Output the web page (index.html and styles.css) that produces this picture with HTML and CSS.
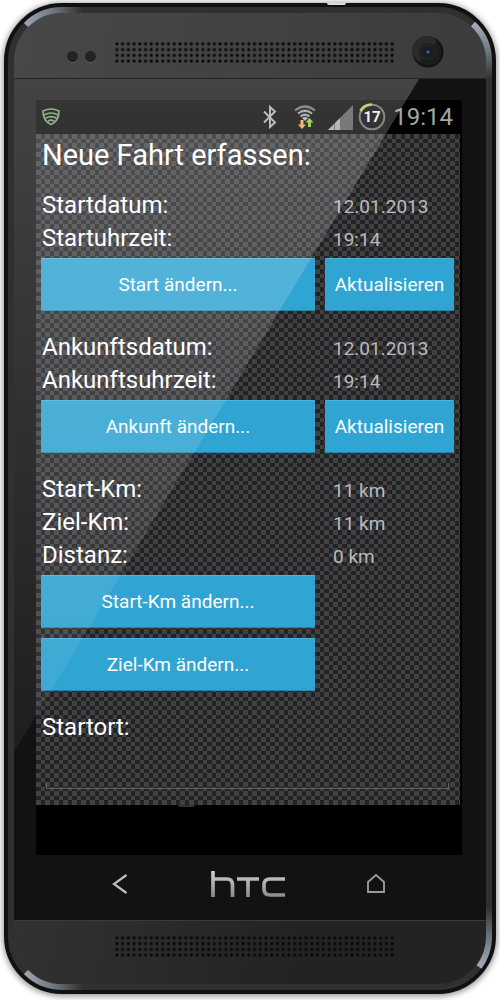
FILE: index.html
```html
<!DOCTYPE html>
<html lang="de">
<head>
<meta charset="utf-8">
<meta name="viewport" content="width=device-width, initial-scale=1">
<title>Neue Fahrt erfassen</title>
<link rel="stylesheet" href="styles.css">
</head>
<body>
<div class="phone">
  <span class="notch"></span>
  <svg class="corner corner-tl" viewBox="0 0 90 90" aria-hidden="true">
    <defs><linearGradient id="g1" gradientUnits="userSpaceOnUse" x1="18" y1="0" x2="75" y2="0"><stop offset="0" stop-color="#9aa3af"/><stop offset=".5" stop-color="#6d747c"/><stop offset="1" stop-color="#6d747c" stop-opacity="0"/></linearGradient></defs>
    <path d="M18 18A51 51 0 0 1 54 3H75" fill="none" stroke="url(#g1)" stroke-width="6"/>
  </svg>
  <svg class="corner corner-tr" viewBox="0 0 90 90" aria-hidden="true">
    <defs><linearGradient id="g2" gradientUnits="userSpaceOnUse" x1="0" y1="18" x2="0" y2="72"><stop offset="0" stop-color="#a0a9b5"/><stop offset=".5" stop-color="#6d747c"/><stop offset="1" stop-color="#6d747c" stop-opacity="0"/></linearGradient></defs>
    <path d="M71 17A51 51 0 0 1 87 54V72" fill="none" stroke="url(#g2)" stroke-width="6"/>
  </svg>
  <svg class="corner corner-bl" viewBox="0 0 90 90" aria-hidden="true">
    <path d="M18 72A51 51 0 0 0 54 87H75" fill="none" stroke="url(#g1)" stroke-width="6"/>
  </svg>
  <svg class="corner corner-br" viewBox="0 0 90 90" aria-hidden="true">
    <defs><linearGradient id="g3" gradientUnits="userSpaceOnUse" x1="0" y1="67" x2="0" y2="7"><stop offset="0" stop-color="#a0a9b5"/><stop offset=".5" stop-color="#6d747c"/><stop offset="1" stop-color="#6d747c" stop-opacity="0"/></linearGradient></defs>
    <path d="M77 67A51 51 0 0 0 87 36V7" fill="none" stroke="url(#g3)" stroke-width="6"/>
  </svg>

  <header class="plate plate-top">
    <span class="sensors"><i></i><i></i></span>
    <svg class="speaker" viewBox="0 0 49 4" aria-hidden="true">
      <defs><pattern id="dots" width="1" height="1" patternUnits="userSpaceOnUse"><circle cx=".5" cy=".5" r=".28" fill="#080808"/></pattern></defs>
      <rect width="49" height="4" fill="url(#dots)"/>
    </svg>
    <svg class="camera" viewBox="0 0 32 32" aria-hidden="true">
      <circle cx="16" cy="16" r="15.5" fill="#131313"/>
      <circle cx="16" cy="16" r="13.500" fill="#1c1c1c"/>
      <path d="M25 5A14 14 0 1 0 7 26Z" fill="#2a2a2a"/>
      <circle cx="16" cy="16" r="9" fill="#202020"/>
      <circle cx="16" cy="16" r="5" fill="#191b20"/>
      <circle cx="16" cy="16" r="1.600" fill="#2f6fc4"/>
    </svg>
  </header>

  <div class="glass">
    <div class="screen">
      <div class="statusbar">
        <svg class="shield" viewBox="0 0 20 20" aria-hidden="true">
          <g fill="none" stroke="#74a066" stroke-width="1.700"><path d="M2 4Q10 0 18 4Q18 14 10 17.500Q2 14 2 4Z"/><path d="M3 8Q10 4 17 8M4.500 11.200Q10 8 15.500 11.200M7 14.200Q10 12 13 14.200"/></g>
        </svg>
        <span class="tray">
          <svg width="16" height="24" viewBox="0 0 16 24" aria-hidden="true"><path d="M2 6.500L13 17.500L8 22V2L13 6.500L2 17.500" fill="none" stroke="#aaa" stroke-width="2"/></svg>
          <svg class="wifi" width="24" height="26" viewBox="0 0 24 26" aria-hidden="true">
            <g fill="none" stroke="#999" stroke-width="2.200"><path d="M2 6.500Q12-1.500 22 6.500" stroke="#6c6c6c"/><path d="M5 9.500Q12 4 19 9.500"/><path d="M7.500 12.500Q12 9 16.500 12.500"/></g>
            <path d="M9 14Q12 12 15 14L12 17Z" fill="#aaa"/>
            <path d="M7.500 16h3v4.500H13L9 25l-4-4.500h2.500Z" fill="#f0a35c"/><path d="M15 23h3v-4.500h2.500L16.500 14l-4 4.500H15Z" fill="#8cc63f"/>
          </svg>
          <svg class="signal" width="26" height="25" viewBox="0 0 26 25" aria-hidden="true"><path d="M25 0V25H0Z" fill="#585858"/><path d="M6 19V25H0ZM12 13V25H7V18Z" fill="#a5a5a5"/></svg>
          <svg class="battery" width="28" height="28" viewBox="0 0 28 28" aria-hidden="true">
            <circle cx="14" cy="14" r="12.300" fill="none" stroke="#6a6a6a" stroke-width="2"/><path d="M2.500 8Q6 1.500 14 1.700" fill="none" stroke="#a4ce45" stroke-width="2.800"/>
            <text x="14" y="19" class="battery-text">17</text>
          </svg>
          <time class="clock">19:14</time>
        </span>
      </div>

      <main class="app">
        <h1>Neue Fahrt erfassen:</h1>
        <section class="block">
          <dl>
            <dt>Startdatum:</dt><dd>12.01.2013</dd>
            <dt>Startuhrzeit:</dt><dd>19:14</dd>
          </dl>
          <div class="actions">
            <button type="button">Start ändern...</button>
            <button type="button">Aktualisieren</button>
          </div>
        </section>
        <section class="block">
          <dl>
            <dt>Ankunftsdatum:</dt><dd>12.01.2013</dd>
            <dt>Ankunftsuhrzeit:</dt><dd>19:14</dd>
          </dl>
          <div class="actions">
            <button type="button">Ankunft ändern...</button>
            <button type="button">Aktualisieren</button>
          </div>
        </section>
        <section class="block">
          <dl>
            <dt>Start-Km:</dt><dd>11 km</dd>
            <dt>Ziel-Km:</dt><dd>11 km</dd>
            <dt>Distanz:</dt><dd>0 km</dd>
          </dl>
          <div class="actions stacked">
            <button type="button">Start-Km ändern...</button>
            <button type="button">Ziel-Km ändern...</button>
          </div>
        </section>
        <section class="block">
          <label for="startort">Startort:</label>
          <input id="startort" type="text">
        </section>
      </main>
      <div class="below"><span class="arc"></span></div>
    </div>

    <nav class="keys">
      <button type="button" aria-label="Zurück"><svg width="18" height="22" viewBox="0 0 18 22"><path d="M15.500 2L3 11L15.500 20" fill="none" stroke="#bdbdbd" stroke-width="2.200"/></svg></button>
      <svg class="logo" viewBox="0 0 76 28" role="img" aria-label="htc">
        <defs><linearGradient id="metal" gradientUnits="userSpaceOnUse" x1="0" y1="0" x2="0" y2="28"><stop offset="0" stop-color="#d0d0d0"/><stop offset="1" stop-color="#888"/></linearGradient></defs>
        <path d="M3 1V27M3 9H17Q22.500 9 22.500 15V27M27 9H49M38 9V27M75 9H60Q54 9 54 15V19Q54 25 60 25H75" fill="none" stroke="url(#metal)" stroke-width="3.700"/>
      </svg>
      <button type="button" aria-label="Startseite"><svg width="20" height="22" viewBox="0 0 20 22"><path d="M2 9L10 2L18 9V19H2Z" fill="none" stroke="#999" stroke-width="1.900"/></svg></button>
    </nav>
    <svg class="sheen" viewBox="0 0 472 841" preserveAspectRatio="none" aria-hidden="true">
      <defs><linearGradient id="shine" x1="0" y1="0" x2="0" y2="1"><stop offset="0" stop-color="#fff" stop-opacity=".21"/><stop offset=".5" stop-color="#fff" stop-opacity=".13"/><stop offset="1" stop-color="#fff" stop-opacity=".05"/></linearGradient></defs>
      <path d="M0 0H405L0 673Z" fill="url(#shine)"/>
    </svg>
  </div>

  <footer class="plate plate-bottom">
    <svg class="speaker" viewBox="0 0 49 4" aria-hidden="true"><rect width="49" height="4" fill="url(#dots)"/></svg>
  </footer>
</div>
</body>
</html>
```
FILE: styles.css
```css
* { box-sizing: border-box; }

body {
  margin: 0;
  padding: 3px 4px 6px;
  background: #fff;
  font-family: Roboto, "Noto Sans", sans-serif;
}

.phone {
  position: relative;
  padding: 6px;
  border: 4px solid #111;
  border-radius: 58px;
  background: #303030;
  box-shadow: 0 1px 6px 1px rgba(0, 0, 0, .45);
}

.notch {
  position: absolute;
  top: -4px;
  left: 66%;
  width: 19px;
  height: 2px;
  border-radius: 0 0 9px 9px;
  background: #ddd;
}

.corner { position: absolute; z-index: 1; width: 90px; height: 90px; pointer-events: none; }
.corner-tl { top: 0; left: 0; }
.corner-tr { top: 0; right: 0; }
.corner-bl { bottom: 0; left: 0; }
.corner-br { right: 0; bottom: 0; }

.plate { display: flex; justify-content: center; }

.plate-top {
  position: relative;
  height: 66px;
  padding-top: 28px;
  border-bottom: 1px solid #252525;
  border-radius: 48px 48px 0 0;
  background: linear-gradient(100deg, #484848, #3c3c3c);
}

.plate-bottom {
  height: 64px;
  padding-top: 14px;
  border-top: 1px solid #3b3b3b;
  border-radius: 0 0 48px 48px;
  background: linear-gradient(100deg, #323232, #232323 60%);
}

.speaker { width: 281px; height: 23px; margin-right: -8px; }

.sensors {
  position: absolute;
  top: 38px;
  left: 53px;
  display: flex;
  gap: 7px;
}

.sensors i {
  width: 11px;
  height: 11px;
  border-radius: 50%;
  background: #232323;
  box-shadow: 0 1px 0 #5a5a5a;
}

.camera { position: absolute; top: 23px; right: 42px; width: 32px; height: 32px; }

.glass {
  position: relative;
  padding: 21px 24px 0 22px;
  background: #121212;
}

.screen { padding-right: 2px; border-radius: 2px; background: #000; }

.statusbar {
  display: flex;
  align-items: center;
  justify-content: space-between;
  height: 34px;
  padding: 0 7px 0 5px;
}

.shield { width: 20px; height: 20px; }
.tray { display: flex; align-items: center; }
.wifi { margin-left: 15px; }
.signal { margin-left: 11px; }
.battery { margin-left: 4px; }
.battery-text { fill: #eee; font-size: 15px; font-weight: 700; text-anchor: middle; }
.clock { margin-left: 7px; color: #a5a5a5; font-size: 24px; line-height: 34px; }

.app {
  padding: 0 6px 16px 5px;
  background-color: #222124;
  background-image: conic-gradient(at 5px 5px, transparent 25%, rgba(255, 255, 255, .14) 0 50%, transparent 0 75%, rgba(255, 255, 255, .14) 0);
  background-size: 9px 9px;
  color: #fff;
}

h1 { margin: 0 0 13px; padding-left: 1px; font-size: 29px; font-weight: 400; line-height: 42px; }
.block + .block { margin-top: 20px; }

dl {
  display: grid;
  grid-template-columns: minmax(0, 1fr) 129px;
  column-gap: 10px;
  align-items: baseline;
  margin: 0 0 3px;
}

dt, label { padding-left: 1px; font-size: 24px; line-height: 33px; }
dd { margin: 0; padding-left: 8px; color: #bbb; font-size: 19px; line-height: 24px; }
label { display: block; }

.actions {
  display: grid;
  grid-template-columns: minmax(0, 1fr) 129px;
  gap: 10px;
}

.stacked button { grid-column: 1; }

.actions button {
  height: 53px;
  padding: 0;
  border: 0;
  border-top: 1px solid #4bb4dc;
  border-bottom: 1px solid #2585ab;
  border-radius: 1px;
  background: #30a4d2;
  color: #fff;
  font: 400 19px Roboto, "Noto Sans", sans-serif;
}

input {
  display: block;
  width: calc(100% - 10px);
  height: 45px;
  margin: 0 5px;
  padding: 0 8px;
  border: 0;
  border-bottom: 1px solid #605e62;
  outline: 0;
  background:
    linear-gradient(#69666b, #69666b) left bottom / 1px 5px no-repeat,
    linear-gradient(#69666b, #69666b) right bottom / 1px 5px no-repeat;
  color: #fff;
  font: 400 20px Roboto, "Noto Sans", sans-serif;
}

.below { position: relative; height: 50px; }

.arc {
  position: absolute;
  top: 0;
  left: 142px;
  width: 17px;
  height: 2px;
  border-radius: 0 0 9px 9px;
  background: #303030;
}

.keys {
  display: flex;
  align-items: center;
  justify-content: space-between;
  height: 65px;
  padding: 0 76px 8px 75px;
}

.keys button { display: flex; padding: 0; border: 0; background: none; }
.logo { width: 76px; height: 28px; }

.sheen {
  position: absolute;
  inset: 0;
  width: 100%;
  height: 100%;
  pointer-events: none;
}
```
